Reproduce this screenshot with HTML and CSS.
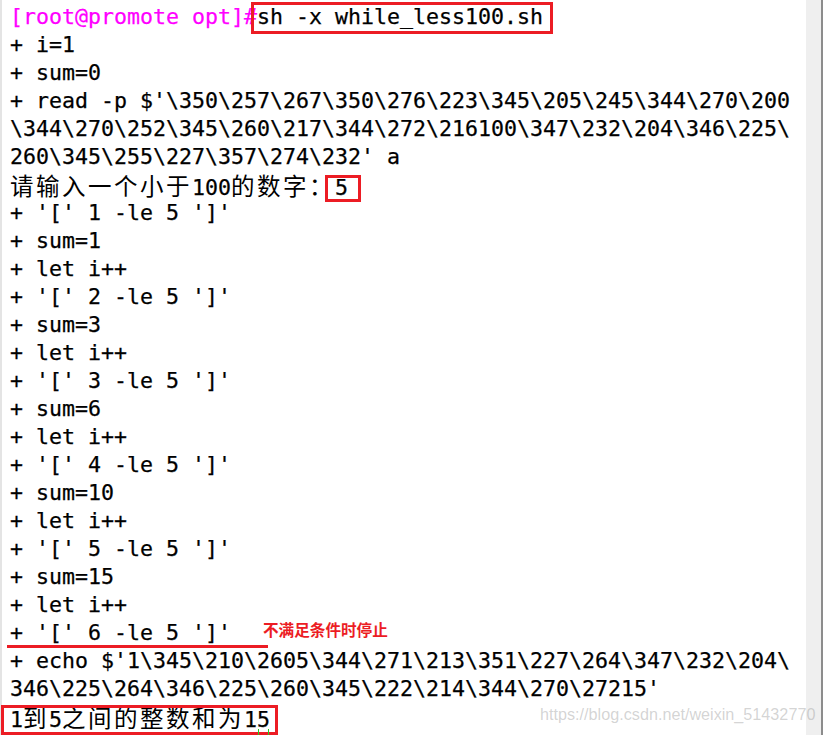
FILE: index.html
```html
<!DOCTYPE html>
<html>
<head>
<meta charset="utf-8">
<link rel="stylesheet" href="styles.css">
</head>
<body>
<div class="term">
  <div class="screen">
    <div class="line"><span class="prompt">[root@promote opt]#</span><span class="boxed box-cmd">sh -x while_less100.sh</span></div>
    <div class="line">+ i=1</div>
    <div class="line">+ sum=0</div>
    <div class="line">+ read -p $'\350\257\267\350\276\223\345\205\245\344\270\200</div>
    <div class="line">\344\270\252\345\260\217\344\272\216100\347\232\204\346\225\</div>
    <div class="line">260\345\255\227\357\274\232' a</div>
    <div class="line"><span class="cjk">请输入一个小于</span>100<span class="cjk">的数字：</span><span class="boxed box-five">5</span></div>
    <div class="line">+ '[' 1 -le 5 ']'</div>
    <div class="line">+ sum=1</div>
    <div class="line">+ let i++</div>
    <div class="line">+ '[' 2 -le 5 ']'</div>
    <div class="line">+ sum=3</div>
    <div class="line">+ let i++</div>
    <div class="line">+ '[' 3 -le 5 ']'</div>
    <div class="line">+ sum=6</div>
    <div class="line">+ let i++</div>
    <div class="line">+ '[' 4 -le 5 ']'</div>
    <div class="line">+ sum=10</div>
    <div class="line">+ let i++</div>
    <div class="line">+ '[' 5 -le 5 ']'</div>
    <div class="line">+ sum=15</div>
    <div class="line">+ let i++</div>
    <div class="line underlined">+ '[' 6 -le 5 ']'<span class="note">不满足条件时停止</span></div>
    <div class="line">+ echo $'1\345\210\2605\344\271\213\351\227\264\347\232\204\</div>
    <div class="line">346\225\264\346\225\260\345\222\214\344\270\27215'</div>
    <div class="line"><span class="boxed box-result">1<span class="cjk">到</span>5<span class="cjk">之间的整数和为</span>15</span></div>
    <div class="cursor"></div>
    <div class="watermark">https://blog.csdn.net/weixin_51432770</div>
  </div>
  <div class="scrollbar"></div>
</div>
</body>
</html>
```

FILE: styles.css
```css
html, body {
  margin: 0;
  padding: 0;
  background: #ffffff;
}

body {
  width: 823px;
  height: 735px;
  overflow: hidden;
}

.term {
  display: flex;
  width: 823px;
  height: 735px;
}

.screen {
  position: relative;
  flex: 1;
  border-left: 2px solid #e4e4e4;
  padding: 3px 0 0 8px;
  font-family: "DejaVu Sans Mono", monospace;
  font-size: 21.6px;
  color: #000000;
  -webkit-text-stroke: 0.25px #000000;
}

.scrollbar {
  width: 15px;
  background: #efefef;
  border-right: 2px solid #8c8c8c;
}

.line {
  position: relative;
  height: 28px;
  line-height: 28px;
  white-space: pre;
}

.prompt {
  color: #ff00ff;
  -webkit-text-stroke: 0.25px #ff00ff;
}

.cjk {
  font-family: "Noto Sans CJK SC", sans-serif;
  font-size: 23.5px;
  letter-spacing: 2.5px;
  line-height: 28px;
  -webkit-text-stroke: 0;
}

.boxed {
  position: relative;
}

.boxed::after {
  content: "";
  position: absolute;
  border: 3px solid #ec1c24;
}

.box-cmd::after {
  left: -6px;
  right: -10px;
  top: -2px;
  bottom: -5px;
}

.box-five::after {
  left: -10px;
  right: -13px;
  top: 0px;
  bottom: -2px;
}

.box-result::after {
  left: -9px;
  right: -8px;
  top: -2px;
  bottom: -3px;
}

.underlined::after {
  content: "";
  position: absolute;
  left: -3px;
  top: 26px;
  width: 261px;
  height: 3px;
  background: #ec1c24;
}

.note {
  position: absolute;
  left: 253px;
  top: 0px;
  line-height: 20px;
  font-family: "Noto Sans CJK SC", sans-serif;
  font-size: 15.6px;
  font-weight: 700;
  color: #ec1c24;
  -webkit-text-stroke: 0;
}

.watermark {
  position: absolute;
  left: 538px;
  top: 705px;
  font-family: "Liberation Sans", sans-serif;
  font-size: 16.2px;
  color: rgba(160, 160, 160, 0.45);
  white-space: nowrap;
  -webkit-text-stroke: 0;
}

.cursor {
  position: absolute;
  left: 256px;
  top: 729px;
  width: 9px;
  height: 6px;
  border-left: 1px solid #22cc22;
  border-right: 1px solid #22cc22;
}
```
